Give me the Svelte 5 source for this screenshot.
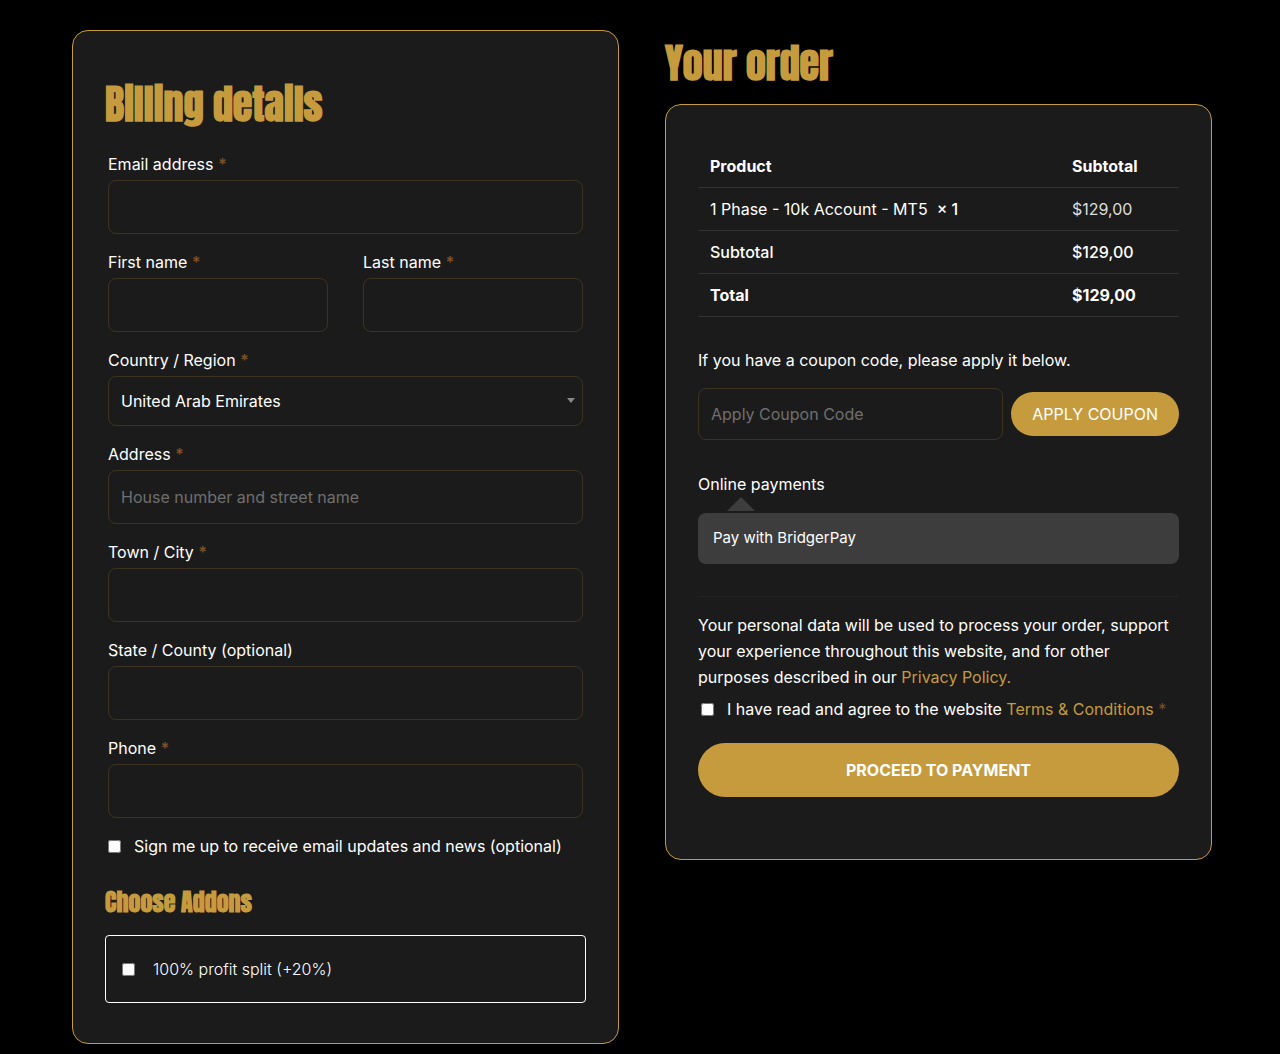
<script>
  const order = { product: '1 Phase - 10k Account - MT5', price: '$129,00' };
</script>

{#snippet star()}<abbr class="required" title="required">*</abbr>{/snippet}

{#snippet field(id, label, required = true, placeholder = '', type = 'text')}
  <div class="field">
    <label for={id}>{label} {#if required}{@render star()}{/if}</label>
    <input class="control" {id} {type} {placeholder} {required} />
  </div>
{/snippet}

<main class="checkout">
  <form class="panel billing">
    <h2 class="title">Billing details</h2>
    <div class="fields">
      {@render field('email', 'Email address', true, '', 'email')}
      <div class="names">
        {@render field('first-name', 'First name')}
        {@render field('last-name', 'Last name')}
      </div>
      <div class="field">
        <label for="country">Country / Region {@render star()}</label>
        <div class="select-wrap">
          <select class="control" id="country">
            <option>United Arab Emirates</option>
          </select>
          <svg class="arrow" viewBox="0 0 8 5" aria-hidden="true"><path d="M0 0h8L4 5z" /></svg>
        </div>
      </div>
      {@render field('address', 'Address', true, 'House number and street name')}
      {@render field('city', 'Town / City')}
      {@render field('state', 'State / County (optional)', false)}
      {@render field('phone', 'Phone', true, '', 'tel')}
      <label class="check"><input type="checkbox" /> <span>Sign me up to receive email updates and news (optional)</span></label>
    </div>
    <h3 class="subtitle">Choose Addons</h3>
    <label class="addon"><input type="checkbox" /> <span>100% profit split (+20%)</span></label>
  </form>

  <section class="order">
    <h2 class="title">Your order</h2>
    <div class="panel summary">
      <table>
        <thead>
          <tr><th class="name">Product</th><th>Subtotal</th></tr>
        </thead>
        <tbody>
          <tr><td>{order.product}&nbsp; <strong>×&nbsp;1</strong></td><td class="light">{order.price}</td></tr>
          <tr class="medium"><td>Subtotal</td><td>{order.price}</td></tr>
          <tr class="total"><td>Total</td><td>{order.price}</td></tr>
        </tbody>
      </table>

      <p class="coupon-hint">If you have a coupon code, please apply it below.</p>
      <form class="coupon">
        <input class="control" type="text" aria-label="Coupon code" placeholder="Apply Coupon Code" />
        <button type="button" class="apply">APPLY COUPON</button>
      </form>

      <p class="method">Online payments</p>
      <svg class="pointer" viewBox="0 0 28 14" aria-hidden="true"><path d="M0 14 14 0l14 14z" /></svg>
      <div class="gateway">Pay with BridgerPay</div>

      <div class="place">
        <p>
          Your personal data will be used to process your order, support your experience throughout
          this website, and for other purposes described in our <a href="#privacy">Privacy Policy.</a>
        </p>
        <div class="check terms">
          <input id="terms" type="checkbox" />
          <label for="terms">I have read and agree to the website <a href="#terms">Terms &amp; Conditions</a> {@render star()}</label>
        </div>
        <button type="button" class="proceed">PROCEED TO PAYMENT</button>
      </div>
    </div>
  </section>
</main>

<style>
  :global(body) {
    background: #000;
  }
  .checkout,
  .checkout * {
    box-sizing: border-box;
  }
  .checkout {
    display: grid;
    grid-template-columns: minmax(0, 1fr) minmax(0, 1fr);
    align-items: start;
    gap: 46px;
    padding: 30px 68px 10px 72px;
    color: #fff;
    font: 400 16px/26px Inter, sans-serif;
  }
  .panel {
    border: 1px solid #c59b3d;
    border-radius: 16px;
    background: #1b1b1b;
  }
  h2,
  h3,
  p {
    margin: 0;
  }
  .title,
  .subtitle {
    color: #c59b3d;
    font-family: Anton, Impact, 'Liberation Sans Narrow', sans-serif;
    font-weight: 700;
    white-space: nowrap;
  }
  .title {
    font-size: 40px;
    line-height: 48px;
  }
  .subtitle {
    margin: 19px 0 9px;
    font-size: 24px;
    line-height: 48px;
  }
  .billing {
    padding: 49px 32px 40px;
  }
  .fields {
    display: grid;
    gap: 15px;
    padding: 23px 3px 0;
  }
  .names {
    display: grid;
    grid-template-columns: 1fr 1fr;
    gap: 35px;
  }
  .field > label {
    display: block;
    padding-bottom: 3px;
  }
  .required {
    color: #7b4f2a;
    text-decoration: none;
  }
  .field .required {
    font-weight: 700;
  }
  .control {
    display: block;
    width: 100%;
    height: 54px;
    margin: 0;
    padding: 0 12px;
    border: 1px solid #3d3323;
    border-radius: 8px;
    background: transparent;
    color: #fff;
    font: inherit;
  }
  .control::placeholder {
    color: #6f6f6f;
    opacity: 1;
  }
  select.control {
    height: 50px;
    appearance: none;
  }
  .select-wrap {
    position: relative;
  }
  .arrow {
    position: absolute;
    top: 22px;
    right: 8px;
    width: 8px;
    height: 5px;
    fill: #888;
    pointer-events: none;
  }
  .check,
  .addon {
    display: flex;
    align-items: center;
  }
  input[type='checkbox'] {
    flex: none;
    width: 13px;
    height: 13px;
    margin: 0;
  }
  .check {
    gap: 13px;
  }
  .addon {
    gap: 18px;
    padding: 20px 16px;
    border: 1px solid #fff;
    border-radius: 4px;
    font-weight: 300;
  }
  .order {
    padding-top: 9px;
  }
  .summary {
    margin-top: 17px;
    padding: 40px 32px 62px;
  }
  table {
    width: 100%;
    border-spacing: 0;
  }
  th,
  td {
    height: 43px;
    padding: 0 12px;
    border-bottom: 1px solid #333;
    text-align: left;
  }
  .name {
    width: 362px;
  }
  th,
  .total td {
    font-weight: 700;
  }
  .medium td,
  strong {
    font-weight: 500;
  }
  .light {
    color: #ddd;
  }
  .coupon-hint {
    padding-top: 30px;
  }
  .coupon {
    display: flex;
    align-items: center;
    gap: 8px;
    margin-top: 15px;
  }
  .coupon .control {
    flex: 1;
    min-width: 0;
    height: 52px;
  }
  button {
    border: 0;
    border-radius: 27px;
    background: #c59b3d;
    color: #fff;
    font: inherit;
  }
  .apply {
    flex: none;
    min-height: 44px;
    padding: 0 21px;
  }
  .method {
    padding-top: 31px;
  }
  .pointer {
    display: block;
    width: 28px;
    height: 14px;
    margin: 0 0 2px 29px;
    fill: #3d3d3d;
  }
  .gateway {
    padding: 12px 15px 13px;
    border-radius: 8px;
    background: #3d3d3d;
    font-size: 15px;
  }
  .place {
    margin-top: 32px;
    padding-top: 15px;
    border-top: 1px solid #232323;
  }
  a {
    color: #c59b3d;
    text-decoration: none;
  }
  .terms {
    margin-top: 6px;
    padding-left: 3px;
  }
  .terms label {
    flex: 1;
  }
  .proceed {
    display: block;
    width: 100%;
    height: 54px;
    margin-top: 21px;
    font-weight: 700;
  }
</style>
